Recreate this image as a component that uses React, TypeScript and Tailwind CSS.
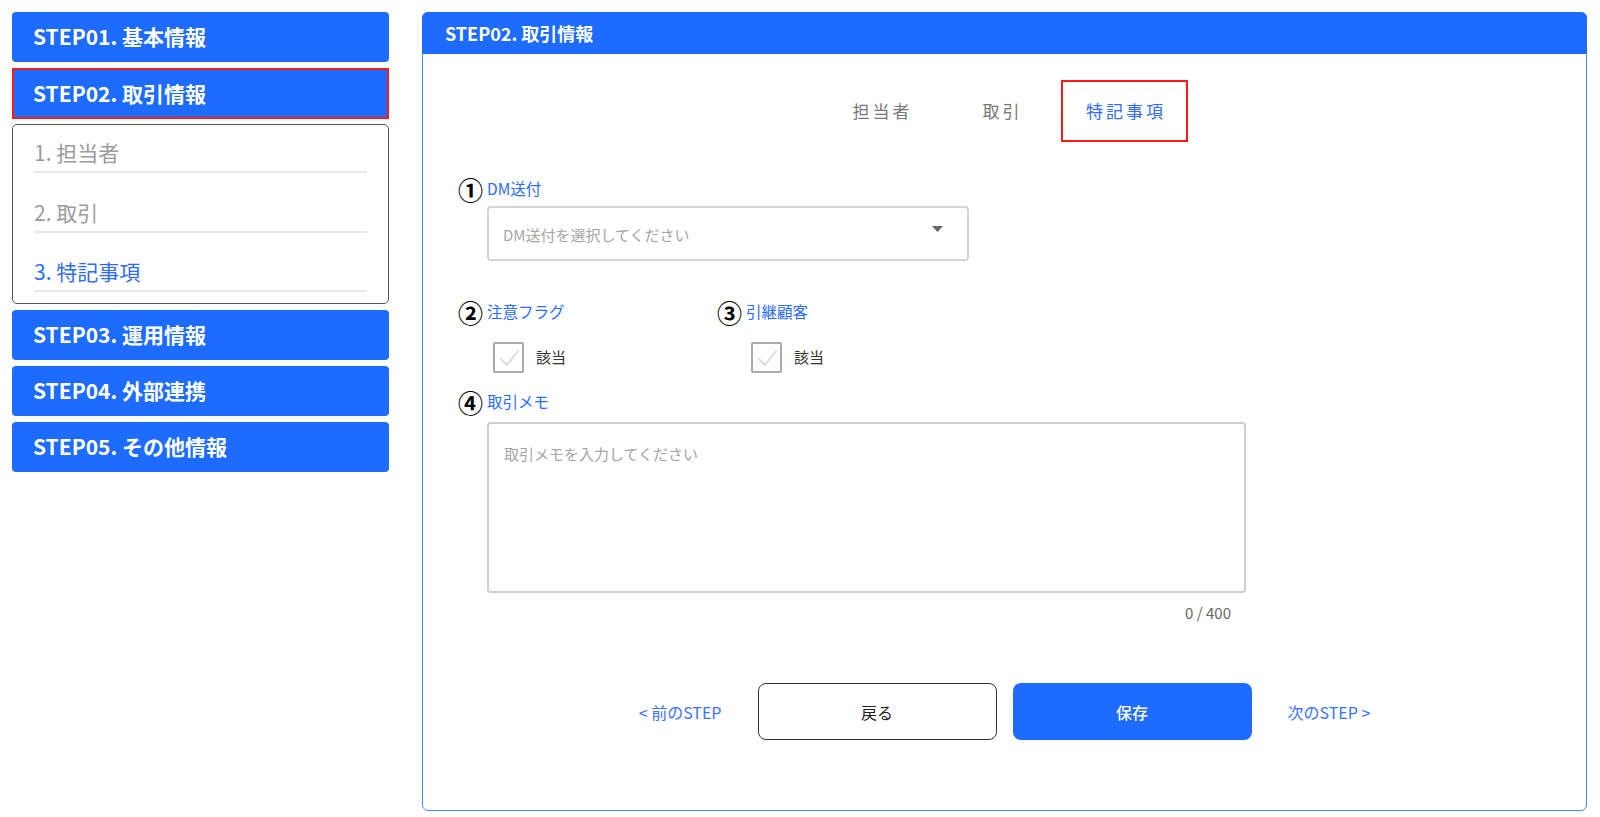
import { useState } from 'react'

const steps = [
  { key: 'step01', label: 'STEP01. 基本情報' },
  { key: 'step02', label: 'STEP02. 取引情報' },
  { key: 'step03', label: 'STEP03. 運用情報' },
  { key: 'step04', label: 'STEP04. 外部連携' },
  { key: 'step05', label: 'STEP05. その他情報' },
]

const subItems = [
  { label: '1. 担当者', h: 'h-[48px]', active: false },
  { label: '2. 取引', h: 'h-[60px]', active: false },
  { label: '3. 特記事項', h: 'h-[59px]', active: true },
]

function StepButton({ label, selected }: { label: string; selected?: boolean }) {
  return (
    <div
      className={`flex items-center text-[21px] font-bold text-white bg-[#1d6cff] ${
        selected ? 'h-[51px] border-2 border-[#ff1a1a] pl-[19px]' : 'h-[50px] rounded-[4px] pl-[21px]'
      }`}
    >
      {label}
    </div>
  )
}

// sub navigation under the current step
function SubNav() {
  return (
    <div className="h-[180px] rounded-[5px] border border-[#555] px-[21px]">
      {subItems.map((item) => (
        <div key={item.label} className={`${item.h} flex items-end border-b-2 border-[#e8e8e8] pb-[7px]`}>
          <span className={`text-[21px] leading-[24px] ${item.active ? 'text-[#2f6cf5]' : 'text-[#9b9b9b]'}`}>
            {item.label}
          </span>
        </div>
      ))}
    </div>
  )
}

function FieldLabel({ num, text }: { num: string; text: string }) {
  return (
    <div className="flex h-[24px] items-center">
      <span className="text-[25px] font-bold leading-none text-black">{num}</span>
      <span className="ml-[4px] text-[15.5px] text-[#2b6bff]">{text}</span>
    </div>
  )
}

function CheckBox({ checked, onToggle }: { checked: boolean; onToggle: () => void }) {
  return (
    <button
      type="button"
      onClick={onToggle}
      className="flex h-[31px] w-[31px] items-center justify-center rounded-[2px] border-2 border-[#ababab] bg-white"
    >
      <svg width="22" height="22" viewBox="0 0 22 22" fill="none">
        <polyline
          points="3,12 9,18 20,4"
          stroke={checked ? '#1d6cff' : '#dcdcdc'}
          strokeWidth="2"
          strokeLinecap="round"
          strokeLinejoin="round"
        />
      </svg>
    </button>
  )
}

export default function App() {
  const [flag, setFlag] = useState(false)
  const [carry, setCarry] = useState(false)
  const [memo, setMemo] = useState('')

  return (
    <div className="flex min-h-[817px] gap-[33px] bg-white px-3 pt-3 font-[family-name:Noto_Sans_CJK_JP,sans-serif]">
      {/* Sidebar */}
      <aside className="flex w-[377px] flex-col">
        <StepButton label={steps[0].label} />
        <div className="mt-[6px]">
          <StepButton label={steps[1].label} selected />
        </div>
        <div className="mt-[5px]">
          <SubNav />
        </div>
        <div className="mt-[6px] flex flex-col gap-[6px]">
          {steps.slice(2).map((s) => (
            <StepButton key={s.key} label={s.label} />
          ))}
        </div>
      </aside>

      {/* Main panel */}
      <section className="flex h-[799px] w-[1165px] flex-col rounded-[6px] border border-[#4d88ff]">
        <div className="-mx-px -mt-px flex h-[42px] items-center rounded-t-[6px] bg-[#1d6cff] pl-[23px] text-[18px] font-bold text-white">
          STEP02. 取引情報
        </div>

        {/* Tabs */}
        <div className="mt-[26px] flex h-[62px] justify-center">
          <div className="flex w-[120px] items-center justify-center pl-[3px] text-[17px] tracking-[3px] text-[#777]">担当者</div>
          <div className="flex w-[120px] items-center justify-center pl-[3px] text-[17px] tracking-[3px] text-[#777]">取引</div>
          <div className="flex w-[127px] items-center justify-center border-2 border-[#ff1a1a] pl-[3px] text-[17px] tracking-[3px] text-[#2f6cf5]">特記事項</div>
        </div>

        <div className="pl-[35px]">
          {/* ① DM送付 */}
          <div className="mt-[35px]">
            <FieldLabel num="①" text="DM送付" />
            <div className="ml-[29px] mt-[5px] flex h-[55px] w-[482px] items-center justify-between rounded-[4px] border-2 border-[#d4d4d4] pl-[14px] pr-[24px]">
              <span className="mt-[3px] text-[15px] text-[#a5a5a5]">DM送付を選択してください</span>
              <svg width="11" height="6" viewBox="0 0 11 6" className="-mt-[9px]">
                <polygon points="0,0 11,0 5.5,6" fill="#666" />
              </svg>
            </div>
          </div>

          {/* ② ③ */}
          <div className="mt-[39px] flex">
            <div className="w-[259px]">
              <FieldLabel num="②" text="注意フラグ" />
              <div className="ml-[35px] mt-[18px] flex items-center gap-[12px]">
                <CheckBox checked={flag} onToggle={() => setFlag(!flag)} />
                <span className="text-[15px] text-[#333]">該当</span>
              </div>
            </div>
            <div>
              <FieldLabel num="③" text="引継顧客" />
              <div className="ml-[34px] mt-[18px] flex items-center gap-[12px]">
                <CheckBox checked={carry} onToggle={() => setCarry(!carry)} />
                <span className="text-[15px] text-[#333]">該当</span>
              </div>
            </div>
          </div>

          {/* ④ 取引メモ */}
          <div className="mt-[17px]">
            <FieldLabel num="④" text="取引メモ" />
            <div className="ml-[29px] mt-[8px] w-[759px]">
              <textarea
                value={memo}
                maxLength={400}
                onChange={(e) => setMemo(e.target.value)}
                placeholder="取引メモを入力してください"
                className="block h-[171px] w-full resize-none rounded-[4px] border-2 border-[#cfcfcf] px-[15px] pt-[20px] text-[15px] leading-[20px] text-[#333] outline-none placeholder:text-[#a5a5a5]"
              />
              <div className="mt-[10px] pr-[15px] text-right text-[15px] leading-[20px] text-[#666]">
                {memo.length} / 400
              </div>
            </div>
          </div>
        </div>

        {/* Footer buttons */}
        <div className="mt-[60px] flex items-center justify-center gap-[36px]">
          <button className="text-[16px] text-[#3b73f5]">&lt; 前のSTEP</button>
          <div className="flex gap-4">
            <button className="h-[57px] w-[239px] rounded-[8px] border border-[#333] bg-white text-[16px] text-[#222]">戻る</button>
            <button className="h-[57px] w-[239px] rounded-[8px] bg-[#1d6cff] text-[16px] font-medium text-white">保存</button>
          </div>
          <button className="text-[16px] text-[#3b73f5]">次のSTEP &gt;</button>
        </div>
      </section>
    </div>
  )
}
